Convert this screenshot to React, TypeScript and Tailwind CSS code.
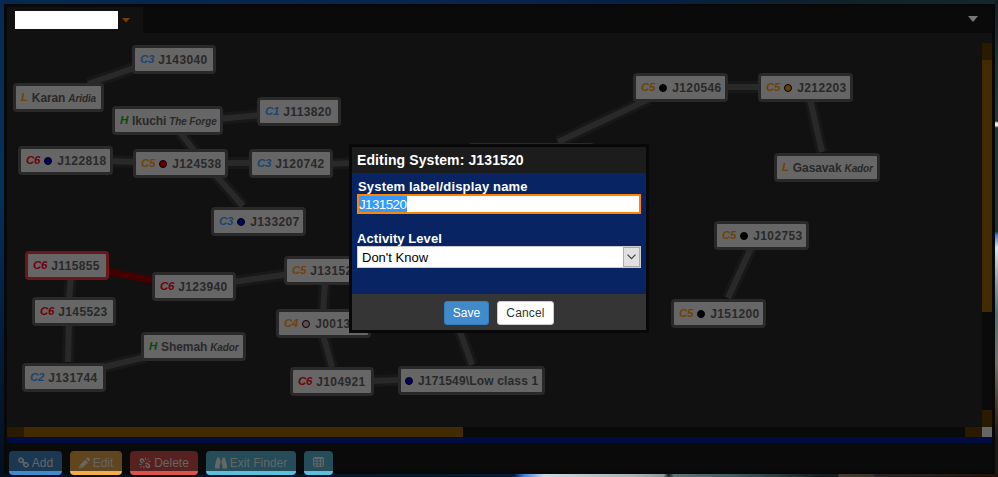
import React from 'react';

type SystemNode = {
  x: number;
  y: number;
  w: number;
  cls?: string;
  name: string;
  region?: string;
  dot?: string;
  alert?: boolean;
};

const BLUE = '#1a446d';
const RED = '#6e000c';
const ORANGE = '#704208';
const GREEN = '#0d480a';

const classColor: Record<string, string> = {
  C1: BLUE, C2: BLUE, C3: BLUE, C4: ORANGE, C5: ORANGE, C6: RED, L: ORANGE, H: GREEN,
};

const nodes: SystemNode[] = [
  { x: 132, y: 45, w: 84, cls: 'C3', name: 'J143040' },
  { x: 13, y: 83, w: 91, cls: 'L', name: 'Karan', region: 'Aridia' },
  { x: 112, y: 106, w: 111, cls: 'H', name: 'Ikuchi', region: 'The Forge' },
  { x: 257, y: 97, w: 84, cls: 'C1', name: 'J113820' },
  { x: 18, y: 146, w: 95, cls: 'C6', name: 'J122818', dot: '#000066' },
  { x: 133, y: 149, w: 95, cls: 'C5', name: 'J124538', dot: '#660000' },
  { x: 249, y: 149, w: 84, cls: 'C3', name: 'J120742' },
  { x: 211, y: 207, w: 95, cls: 'C3', name: 'J133207', dot: '#000066' },
  { x: 25, y: 251, w: 84, cls: 'C6', name: 'J115855', alert: true },
  { x: 152, y: 272, w: 84, cls: 'C6', name: 'J123940' },
  { x: 32, y: 297, w: 84, cls: 'C6', name: 'J145523' },
  { x: 22, y: 363, w: 84, cls: 'C2', name: 'J131744' },
  { x: 141, y: 332, w: 105, cls: 'H', name: 'Shemah', region: 'Kador' },
  { x: 284, y: 256, w: 84, cls: 'C5', name: 'J131520' },
  { x: 276, y: 309, w: 95, cls: 'C4', name: 'J001370', dot: '#664c52' },
  { x: 290, y: 367, w: 84, cls: 'C6', name: 'J104921' },
  { x: 398, y: 366, w: 147, name: 'J171549\\Low class 1', dot: '#000066' },
  { x: 633, y: 73, w: 95, cls: 'C5', name: 'J120546', dot: '#000000' },
  { x: 758, y: 73, w: 95, cls: 'C5', name: 'J212203', dot: '#664200' },
  { x: 774, y: 153, w: 106, cls: 'L', name: 'Gasavak', region: 'Kador' },
  { x: 714, y: 221, w: 95, cls: 'C5', name: 'J102753', dot: '#000000' },
  { x: 671, y: 299, w: 95, cls: 'C5', name: 'J151200', dot: '#000000' },
  { x: 468, y: 143, w: 127, name: '' },
];

const links: [number, number, number, number][] = [
  [88, 84, 137, 67],
  [218, 119, 262, 115],
  [179, 131, 196, 153],
  [108, 161, 138, 162],
  [223, 163, 254, 163],
  [328, 164, 472, 158],
  [213, 172, 243, 206],
  [71, 276, 69, 300],
  [69, 322, 68, 362],
  [100, 368, 146, 357],
  [232, 282, 290, 274],
  [325, 282, 323, 312],
  [323, 335, 332, 367],
  [370, 381, 402, 380],
  [455, 318, 472, 365],
  [558, 142, 649, 99],
  [724, 87, 762, 87],
  [810, 99, 822, 152],
  [751, 248, 728, 298],
];

function nameTracking(node: SystemNode) {
  if (node.region) return 'tracking-[-0.1px]';
  return node.cls ? 'tracking-[0.35px]' : 'tracking-[0.15px]';
}

function MapNode({ node }: { node: SystemNode }) {
  return (
    <div
      className={`absolute flex h-[29px] items-center overflow-hidden rounded-[4px] border-[3px] bg-[#666] pl-[5px] whitespace-nowrap ${node.alert ? 'border-[#6b1719]' : 'border-[#292929]'}`}
      style={{ left: node.x, top: node.y, width: node.w }}
    >
      {node.cls && (
        <span className="mr-[4px] pt-px text-[11.5px] font-bold italic tracking-[-0.2px]" style={{ color: classColor[node.cls] }}>
          {node.cls}
        </span>
      )}
      {node.dot && (
        <span
          className={`mr-[5px] h-2 w-2 shrink-0 rounded-full border border-black ${node.cls ? '' : '-ml-px'}`}
          style={{ backgroundColor: node.dot }}
        />
      )}
      <span className={`text-[12px] font-bold text-[#292929] ${nameTracking(node)}`}>{node.name}</span>
      {node.region && (
        <span className="ml-[3px] pt-[2px] text-[10px] font-bold italic tracking-[-0.1px] text-[#292929]">
          {node.region}
        </span>
      )}
    </div>
  );
}

function ToolButton({ className, children }: { className: string; children: React.ReactNode }) {
  return (
    <button
      className={`flex h-6 items-center justify-center gap-[3px] rounded-[4px] border-b-4 pt-[3px] text-[12px] text-[#666] ${className}`}
    >
      {children}
    </button>
  );
}

const LinkIcon = () => (
  <svg width="11" height="11" viewBox="0 0 12 12" fill="none" stroke="#666" strokeWidth="1.6">
    <rect x="1" y="1.5" width="4.8" height="4" rx="1.7" transform="rotate(45 3.4 3.5)" />
    <rect x="6.2" y="6.5" width="4.8" height="4" rx="1.7" transform="rotate(45 8.6 8.5)" />
    <path d="M4.2 4.2l3.6 3.6" />
  </svg>
);

const PencilIcon = () => (
  <svg width="11" height="12" viewBox="0 0 11 12" fill="#666">
    <path d="M0 11.5l.8-3.6L6.2 2.5l2.9 2.9-5.4 5.3zM6.9 1.8L8.2.6q.6-.5 1.2 0l1.5 1.5q.5.6 0 1.2L9.8 4.6z" />
    <path d="M1.4 9.1l1.2 1.2" stroke="#60451f" />
  </svg>
);

const UnlinkIcon = () => (
  <svg width="12" height="12" viewBox="0 0 13 12" fill="none" stroke="#666" strokeWidth="1.6">
    <path d="M5.7 4.7L4.5 2.5Q3.3 1 1.9 2.3 1 3.5 2.2 4.6L4 6.1M7 6.3l2 .2 2 1.8q1 1.2-.1 2.1-1 1-2.2-.1L7 8.5" />
    <path strokeWidth="1" d="M7 0v2.5M10.5 1L8.6 3M12.5 4.2H10M0 7.5h3M1.2 11l2-2M5.2 12V9.2" />
  </svg>
);

const BinocularsIcon = () => (
  <svg width="12" height="12" viewBox="0 0 13 12" fill="#666">
    <path d="M2.2 0h2.5v1.3h.8V8H5v4H0V8.2L1.8 1.6h.4zM8.3 0h2.5v1.6h.4L13 8.2V12H8V8h-.5V1.3h.8zM6 3h1v3.5H6z" />
  </svg>
);

const TableIcon = () => (
  <svg width="12" height="11" viewBox="0 0 12 11" fill="none" stroke="#666">
    <rect x=".5" y=".5" width="10" height="9" rx="1" />
    <path d="M.5 1.5h10M.5 4h10M.5 7h10M4 1v9M7.5 1v9" />
  </svg>
);

function EditDialog() {
  return (
    <div className="absolute top-[144px] left-[349px] flex h-[189px] w-[300px] flex-col border-[3px] border-[#080808] text-white">
      <header className="flex h-[26px] shrink-0 items-center bg-[#1c1c1c] pl-[5px] text-[14px] font-bold tracking-[0.11px]">
        Editing System: J131520
      </header>
      <div className="flex h-[121px] shrink-0 flex-col bg-[#082463] px-[5px] pt-[5px]">
        <label className="h-4 pl-px text-[13px] leading-[17px] font-bold tracking-[0.17px]">System label/display name</label>
        <div className="flex h-5 items-center border-2 border-[#ff8400] bg-white">
          <span className="h-4 w-12 bg-[#3399ff] text-[13.33px] leading-[17px] tracking-[-0.55px] text-white">J131520</span>
        </div>
        <label className="mt-4 h-4 text-[13px] leading-[17px] font-bold tracking-[0.08px]">Activity Level</label>
        <div className="flex h-[22px] border border-[#ccc] bg-white">
          <span className="flex-1 pl-1 text-[13px] leading-[21px] text-black">Don't Know</span>
          <span className="flex h-5 w-[17px] items-center justify-center border border-[#acacac] bg-[#e1e1e1]">
            <svg width="9" height="6" viewBox="0 0 9 6" fill="none" stroke="#444" strokeWidth="1.2">
              <path d="M.5 .7l4 4 4-4" />
            </svg>
          </span>
        </div>
      </div>
      <footer className="flex flex-1 justify-center gap-2 bg-[#353535] pt-[7px]">
        <button className="h-6 w-[45px] rounded-[3px] border border-[#357ebd] bg-[#428bca] text-[12px] leading-[22px]">Save</button>
        <button className="h-6 w-[57px] rounded-[3px] border border-[#ccc] bg-white text-[12px] leading-[22px] tracking-[0.15px] text-[#333]">Cancel</button>
      </footer>
    </div>
  );
}

export default function App() {
  return (
    <div className="relative h-[477px] w-[998px] overflow-hidden bg-[linear-gradient(90deg,#05294d,#09254c_45%,#062044_65%,#102128_85%,#15272c)] p-1 pr-[3px] pb-[3px] font-['Liberation_Sans',Arial,sans-serif]">
      <div className="absolute inset-y-0 left-0 w-1 bg-[linear-gradient(#082951,#052e52_15%,#053159_40%,#031d3d_70%,#02101e)]" />
      <div className="absolute inset-y-0 right-0 w-[3px] bg-[linear-gradient(#101d22,#1b3037_12%,#20383c_25.4%,#e5eded_25.8%,#e5eded_26.3%,#20383c_26.8%,#203136_48.5%,#3f80df_49.3%,#d5e4ef_52%,#8294a0_60%,#527078_66%,#727267_76%,#4b402c_84%,#201810_92%)]" />
      <div className="absolute inset-x-0 bottom-0 h-[3px] bg-[linear-gradient(90deg,#031022,#06182d_45%,#071a38_51.5%,#3f7fe0_52.5%,#c9d9e2_54.5%,#a5b0ae_64%,#8a9998_66.5%,#162225_67%,#5d7478_67.5%,#3c585d_74%,#171e20_82%,#171e20_83.9%,#443c2c_84.1%,#3b352a_87.4%,#272423_87.7%,#241f1c_93.5%,#201008)]" />
      <main className="relative flex h-[470px] w-[991px] flex-col border-[3px] border-[#080808] bg-[#0a0a0a]">
        <nav className="flex h-[26px] shrink-0 items-start justify-between pr-[14px]">
          <div className="flex h-full w-[136px] items-start bg-[#111] pt-1 pl-2">
            <span className="h-[18px] w-[103px] bg-white" />
            <svg className="mt-[7px] ml-1" width="8" height="5" viewBox="0 0 8 5">
              <path d="M0 0h8L4 4.5z" fill="#784006" />
            </svg>
          </div>
          <svg className="mt-[9px]" width="10" height="6" viewBox="0 0 10 6">
            <path d="M0 0h10L5 6z" fill="#777" />
          </svg>
        </nav>
        <section className="flex h-[404px] shrink-0 flex-col bg-[#111]">
          <div className="flex h-[394px] justify-end">
            <div className="mt-[10px] flex w-[10px] flex-col bg-[#0a0a0a]">
              <div className="h-[17px] bg-[#291a00]" />
              <div className="h-[252px] bg-[#422b00]" />
              <div className="mt-auto h-[17px] bg-[#291a00]" />
            </div>
          </div>
          <div className="flex h-[10px] bg-[#0a0a0a]">
            <div className="w-[17px] bg-[#291a00]" />
            <div className="w-[439px] bg-[#422b00]" />
            <div className="ml-auto w-[17px] bg-[#291a00]" />
            <div className="w-[10px] bg-[#666]" />
          </div>
        </section>
        <div className="h-[6px] shrink-0 bg-[#000d42]" />
        <footer className="flex gap-2 pt-2 pl-[2px]">
          <ToolButton className="w-[53px] border-[#428bca] bg-[#1a3851]"><LinkIcon />Add</ToolButton>
          <ToolButton className="w-[52px] border-[#f0ad4e] bg-[#60451f]"><PencilIcon />Edit</ToolButton>
          <ToolButton className="w-[68px] border-[#d9534f] bg-[#572120]"><UnlinkIcon />Delete</ToolButton>
          <ToolButton className="w-[90px] border-[#5bc0de] bg-[#244d59]"><BinocularsIcon />Exit Finder</ToolButton>
          <ToolButton className="w-[29px] border-[#5bc0de] bg-[#244d59]"><TableIcon /></ToolButton>
        </footer>
      </main>
      <svg className="absolute inset-0" width="998" height="477">
        {links.map(([x1, y1, x2, y2], i) => (
          <g key={i}>
            <line x1={x1} y1={y1} x2={x2} y2={y2} stroke="#181818" strokeWidth="12" />
            <line x1={x1} y1={y1} x2={x2} y2={y2} stroke="#292929" strokeWidth="6" />
          </g>
        ))}
        <line x1="105" y1="271" x2="156" y2="281" stroke="#440000" strokeWidth="7" />
      </svg>
      {nodes.map((node) => (
        <MapNode key={`${node.x}-${node.y}`} node={node} />
      ))}
      <EditDialog />
    </div>
  );
}
